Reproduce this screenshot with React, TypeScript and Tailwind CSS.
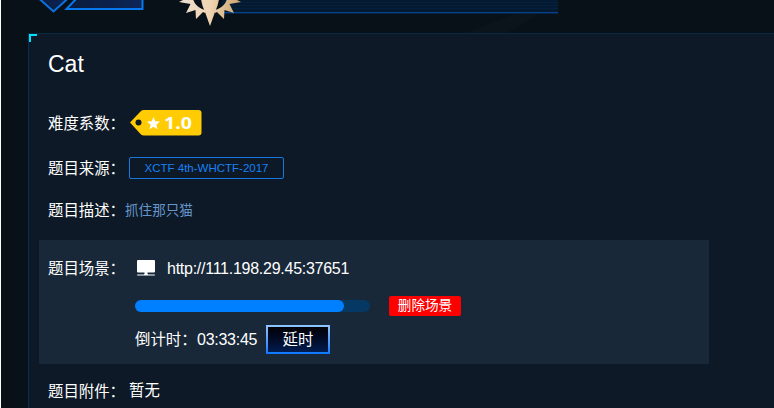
import type { ReactNode } from "react";

const FONT = "font-['Liberation_Sans','Noto_Sans_CJK_SC',sans-serif]";

function HeaderArt() {
  return (
    <svg className="block h-[33px] w-full shrink-0" viewBox="0 0 774 33" preserveAspectRatio="none" aria-hidden="true">
      <defs>
        <linearGradient id="gold" gradientUnits="userSpaceOnUse" x1="179" y1="0" x2="241" y2="8">
          <stop offset="0" stopColor="#ecdfd0" />
          <stop offset="0.5" stopColor="#f0d5b2" />
          <stop offset="1" stopColor="#c9a06a" />
        </linearGradient>
        <linearGradient id="plate" x1="0" y1="0" x2="1" y2="0">
          <stop offset="0" stopColor="#0a1b3d" />
          <stop offset="1" stopColor="#0c2658" />
        </linearGradient>
      </defs>
      <path d="M466 33 L516 14 L540 14 L506 33 Z" fill="#0d181e" opacity="0.6" />
      <rect x="222" y="0" width="336" height="14" fill="#031a31" />
      <path d="M222 2.5H558M222 5.5H558M222 8.5H558" stroke="#04203c" strokeWidth="1" />
      <rect x="222" y="12" width="336" height="1" fill="#054187" />
      <rect x="222" y="13" width="336" height="1" fill="#04264c" />
      <path d="M38.5 -2 L53.5 11.5 L68.5 -2" fill="url(#plate)" stroke="#0b72e0" strokeWidth="2" />
      <path d="M78 -3 L66.5 9 H142.5 V-3" fill="url(#plate)" stroke="#0878ee" strokeWidth="2" />
      <path
        d="M179 2 L185 -1 H193 Q195 6 202 9 L205 10 L205 13 L203 12 L196 19 L195.5 10 L186 13 L190.5 4 Z"
        fill="url(#gold)"
      />
      <path
        d="M241 2 L235 -1 H227 Q225 6 218 9 L215 10 L215 13 L217 12 L224 19 L224.5 10 L234 13 L229.5 4 Z"
        fill="url(#gold)"
      />
      <path d="M201 -1 H219 Q218 6 215 12 L210 26 L205 12 Q202 6 201 -1 Z" fill="url(#gold)" />
    </svg>
  );
}

function Row({ label, className, children }: { label: string; className: string; children: ReactNode }) {
  return (
    <div className={`flex items-center ${className}`}>
      <span className="w-[81px] shrink-0 pt-0.5 whitespace-nowrap">{label}</span>
      {children}
    </div>
  );
}

function DifficultyTag() {
  return (
    <svg className="block h-[27px] w-[73px]" viewBox="0 0 73 27" role="img" aria-label="1.0">
      <path d="M1 13.5 L12 2 Q13 1 15 1 H69.5 Q72.5 1 72.5 4 V23.5 Q72.5 26.5 69.5 26.5 H15 Q13 26.5 12 25.5 Z" fill="#ffcc04" />
      <circle cx="9.5" cy="13.5" r="3" fill="#0d1926" />
      <path d="M24.5 8 L26.3 12.2 L31 12.6 L27.4 15.7 L28.5 20.2 L24.5 17.8 L20.5 20.2 L21.6 15.7 L18 12.6 L22.7 12.2 Z" fill="#fff" />
      <text x="35" y="19.5" fill="#fff" fontFamily="Open Sans, sans-serif" fontWeight="700" fontSize="16.5" textLength="28" lengthAdjust="spacingAndGlyphs">1.0</text>
    </svg>
  );
}

function Monitor() {
  return (
    <svg className="block h-4 w-5 shrink-0" viewBox="0 0 20 16" aria-hidden="true">
      <rect x="1" y="0" width="18" height="12.5" rx="1" fill="#fff" />
      <rect x="8.5" y="12" width="3" height="2.5" fill="#fff" />
      <rect x="1" y="14" width="18" height="2" rx="0.8" fill="#8996a2" />
      <rect x="8" y="14" width="4" height="1" fill="#fff" />
    </svg>
  );
}

export default function App() {
  return (
    <div className={`h-[408px] w-[774px] overflow-hidden border-l border-white bg-[#091118] text-[15.4px] leading-[22px] text-white ${FONT}`}>
      <div className="-ml-px flex h-full flex-col">
        <HeaderArt />
        <main className="relative ml-7 min-h-0 flex-1 border-t border-l border-t-[#0a2945] border-l-[#062d55] bg-[#0d1926]">
          <span className="absolute top-0 left-0 size-2 border-t-2 border-l-2 border-[#00dff5]" />
          <h1 className="mt-[16px] ml-[19px] text-[23px] leading-7">Cat</h1>
          <Row label="难度系数：" className="mt-[31px] ml-[19px] h-[27px]">
            <DifficultyTag />
          </Row>
          <Row label="题目来源：" className="mt-[21px] ml-[19px] h-[22px]">
            <span className="flex h-[22px] w-[155px] items-center justify-center rounded-[2px] border border-[#1478df] text-[11.5px] whitespace-nowrap text-[#1682f5]">
              XCTF 4th-WHCTF-2017
            </span>
          </Row>
          <Row label="题目描述：" className="mt-[20px] ml-[19px] h-[22px]">
            <span className="-ml-1 pt-0.5 text-[13.6px] text-[#6594ca]">抓住那只猫</span>
          </Row>
          <section className="mt-[19px] ml-[10px] h-[124px] w-[670px] bg-[#182838] pt-[17px] pl-[9px]">
            <div className="flex h-[22px] items-center">
              <span className="w-[88px] shrink-0 pt-0.5 whitespace-nowrap">题目场景：</span>
              <Monitor />
              <span className="ml-[11px] pt-0.5 text-[16px] tracking-[-0.26px]">http://111.198.29.45:37651</span>
            </div>
            <div className="mt-[17px] ml-[87px] flex h-5 items-center">
              <div className="h-3 w-[235px] rounded-full bg-[#053963]">
                <div className="h-full w-[209px] rounded-full bg-[#0080ff]" />
              </div>
              <button className="ml-[19px] h-5 w-[72px] rounded-[2px] bg-[#ff0000] text-[13.6px] leading-5">删除场景</button>
            </div>
            <div className="mt-[9px] ml-[87px] flex h-[29px] items-center">
              <span className="w-[62px] whitespace-nowrap">倒计时：</span>
              <span className="w-[69px] text-[16px] tracking-[-0.26px]">03:33:45</span>
              <button className="h-[29px] w-16 bg-linear-to-b from-[#8fc4ff] to-[#0578ff] p-0.5">
                <span className="flex h-full items-center justify-center bg-linear-to-b from-[#010207] to-[#001c50]">延时</span>
              </button>
            </div>
          </section>
          <Row label="题目附件：" className="mt-[16px] ml-[19px] h-[22px]">
            <span>暂无</span>
          </Row>
        </main>
      </div>
    </div>
  );
}
